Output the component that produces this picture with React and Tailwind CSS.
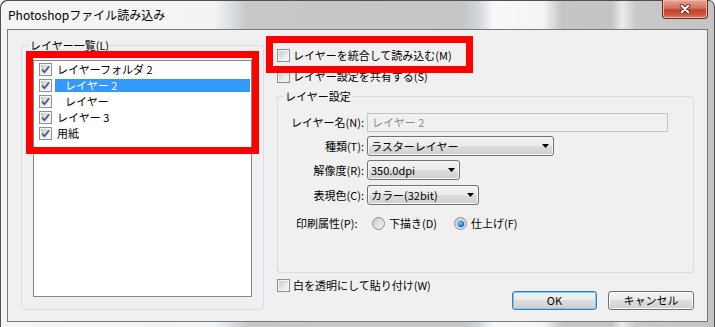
import React from "react";

const layers = [
  { name: "レイヤーフォルダ 2", indent: false, selected: false },
  { name: "レイヤー 2", indent: true, selected: true },
  { name: "レイヤー", indent: true, selected: false },
  { name: "レイヤー 3", indent: false, selected: false },
  { name: "用紙", indent: false, selected: false },
];

const CheckBox = ({ checked }) => (
  <span className="flex h-[13px] w-[13px] shrink-0 border border-[#8e8f8f] bg-[#f4f4f4] p-[1px]">
    <span className="flex h-full w-full items-center justify-center bg-[linear-gradient(135deg,#c5c9cf,#e9ebee_65%,#f6f6f6)]">
      {checked && (
        <svg width="9" height="9" viewBox="0 0 9 9">
          <path d="M1.2 4.6 L3.5 7.2 L8 1.4" fill="none" stroke="#3f5390" strokeWidth="1.7" />
        </svg>
      )}
    </span>
  </span>
);

const Radio = ({ checked }) => (
  <span className="flex h-[13px] w-[13px] shrink-0 items-center justify-center rounded-full border border-[#8e8f8f] bg-[linear-gradient(135deg,#c8ccd2,#f4f4f4)]">
    {checked && (
      <span className="h-[6px] w-[6px] rounded-full bg-[radial-gradient(circle_at_40%_40%,#8fd3ff,#1a6fc4_55%,#0b3f86)] shadow-[0_0_1px_1px_#9ec8ee]" />
    )}
  </span>
);

const Select = ({ value, className }) => (
  <div
    className={`flex h-[20px] items-center justify-between rounded-[3px] border border-[#707070] bg-[linear-gradient(#f2f2f2,#ebebeb_50%,#dddddd_50%,#cfcfcf)] pl-[3px] pr-[4px] shadow-[inset_0_0_0_1px_#f8f8f8] ${className}`}
  >
    <span>{value}</span>
    <svg width="7" height="4" viewBox="0 0 7 4">
      <path d="M0 0h7L3.5 4z" fill="#000" />
    </svg>
  </div>
);

export default function App() {
  return (
    <div className="relative h-[327px] w-[715px] overflow-hidden rounded-t-[7px] bg-[linear-gradient(90deg,#f5f5f5_0%,#f2f3f4_30%,#dde2e8_32%,#c8c8c8_34.5%,#c6c6c6_65%,#d2d8de_67%,#f8f8f8_69%,#f4f4f4_76%,#c6c6c6_78.5%,#c4c4c4_85.5%,#ebebeb_87%,#c9c9c9_89%,#c4c4c4_100%)] font-['Noto_Sans_CJK_JP','Liberation_Sans',sans-serif] text-[11px] leading-[13px] text-black shadow-[inset_1px_1px_0_#505050,inset_-1px_0_0_#505050]">
      {/* Title bar */}
      <div className="flex h-[29px] items-start justify-between">
        <span className="pl-[8px] pt-[7px] text-[12px] leading-[15px]">Photoshopファイル読み込み</span>
        <button className="mr-[7px] flex h-[19px] w-[46px] items-center justify-center rounded-b-[4px] border border-t-0 border-[#6b2b20] bg-[linear-gradient(#e9a696,#d6705f_45%,#c2412d_55%,#cf5a3f_85%,#e58a6c)] shadow-[inset_0_0_0_1px_#f0b6a8]">
          <svg width="12" height="10" viewBox="0 0 12 10">
            <path d="M2.5 1.5 L9.5 8.5 M9.5 1.5 L2.5 8.5" stroke="#4a1a12" strokeWidth="3.6" strokeLinecap="round" />
            <path d="M2.5 1.5 L9.5 8.5 M9.5 1.5 L2.5 8.5" stroke="#ffffff" strokeWidth="2" strokeLinecap="round" />
          </svg>
        </button>
      </div>

      {/* Client area */}
      <div className="mx-[7px] h-[293px] border border-[#787878] bg-[#f0f0f0]">
        <div className="flex pl-[13px] pt-[9px]">
          {/* Layer list group */}
          <fieldset className="h-[271px] w-[243px] rounded-[3px] border border-[#d5dfe5]">
            <legend className="ml-[7px] px-[1px] leading-[13px]">レイヤー一覧(L)</legend>
            <div className="mx-[11px] mt-[8px] h-[237px] border border-[#828790] bg-white">
              {layers.map((layer) => (
                <div key={layer.name} className="flex h-[16px] items-center pl-[5px]">
                  <CheckBox checked />
                  <span
                    className={`ml-[3px] mr-[1px] flex h-[13px] flex-1 items-center ${layer.indent ? "pl-[10px]" : "pl-[2px]"} ${layer.selected ? "bg-[#3399ff] text-white" : ""}`}
                  >
                    {layer.name}
                  </span>
                </div>
              ))}
            </div>
          </fieldset>

          {/* Options */}
          <div className="ml-[13px] flex w-[417px] flex-col">
            <label className="mt-[10px] flex h-[13px] items-center gap-[3px]">
              <CheckBox />
              <span>レイヤーを統合して読み込む(M)</span>
            </label>
            <label className="mt-[8px] flex h-[13px] items-center gap-[3px]">
              <CheckBox />
              <span>レイヤー設定を共有する(S)</span>
            </label>

            <fieldset className="mt-[7px] h-[183px] rounded-[3px] border border-[#d5dfe5]">
              <legend className="ml-[6px] px-[1px] leading-[13px]">レイヤー設定</legend>
              <div className="mt-[10px] flex flex-col">
                <div className="flex h-[19px] items-center">
                  <span className="w-[86px] text-right">レイヤー名(N):</span>
                  <div className="ml-[3px] flex h-[19px] w-[301px] items-center border border-[#c2c6ca] bg-[#f0f0f0] pl-[4px] text-[#8a8a8a]">
                    レイヤー 2
                  </div>
                </div>
                <div className="mt-[4px] flex items-center">
                  <span className="w-[86px] text-right">種類(T):</span>
                  <Select value="ラスターレイヤー" className="ml-[3px] w-[187px]" />
                </div>
                <div className="mt-[4px] flex items-center">
                  <span className="w-[86px] text-right">解像度(R):</span>
                  <Select value="350.0dpi" className="ml-[3px] w-[93px]" />
                </div>
                <div className="mt-[5px] flex items-center">
                  <span className="w-[86px] text-right">表現色(C):</span>
                  <Select value="カラー(32bit)" className="ml-[3px] w-[112px]" />
                </div>
                <div className="mt-[12px] flex h-[13px] items-center pl-[18px]">
                  <span className="w-[76px]">印刷属性(P):</span>
                  <Radio />
                  <span className="ml-[4px] w-[65px]">下描き(D)</span>
                  <Radio checked />
                  <span className="ml-[4px]">仕上げ(F)</span>
                </div>
              </div>
            </fieldset>

            <label className="mt-[6px] flex h-[13px] items-center gap-[3px]">
              <CheckBox />
              <span>白を透明にして貼り付け(W)</span>
            </label>

            <div className="-mt-[1px] flex justify-end gap-[11px]">
              <button className="h-[19px] w-[85px] rounded-[3px] border border-[#3c7fb1] bg-[linear-gradient(#f2f2f2,#ebebeb_50%,#dddddd_50%,#cfcfcf)] shadow-[inset_0_0_0_1px_#6fd0f5]">
                OK
              </button>
              <button className="h-[19px] w-[86px] rounded-[3px] border border-[#707070] bg-[linear-gradient(#f2f2f2,#ebebeb_50%,#dddddd_50%,#cfcfcf)] shadow-[inset_0_0_0_1px_#fbfbfb]">
                キャンセル
              </button>
            </div>
          </div>
        </div>
      </div>

      {/* Red annotation frames */}
      <div className="pointer-events-none absolute left-[26px] top-[51px] h-[103px] w-[233px] border-[7px] border-[#ff0000]" />
      <div className="pointer-events-none absolute left-[266px] top-[36px] h-[37px] w-[207px] border-[7px] border-[#ff0000]" />
    </div>
  );
}
